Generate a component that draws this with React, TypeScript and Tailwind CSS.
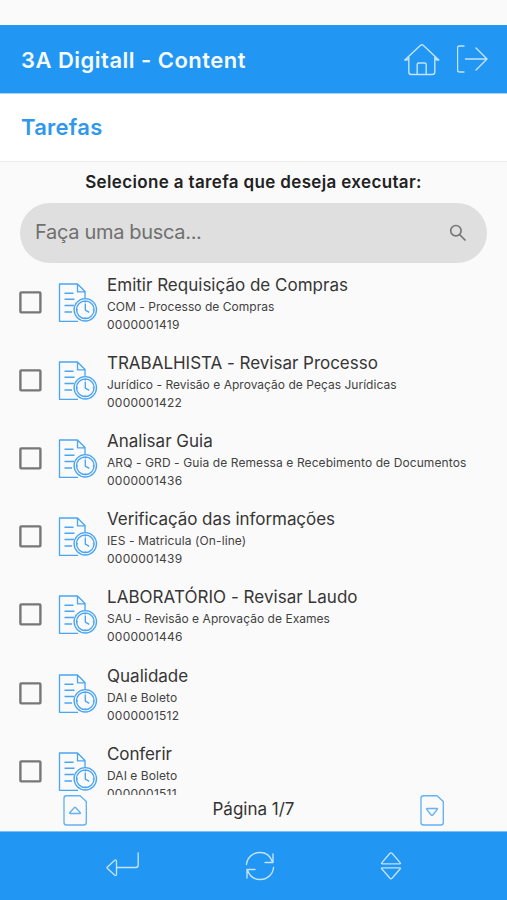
const tasks = [
  { title: 'Emitir Requisição de Compras', process: 'COM - Processo de Compras', id: '0000001419', titleSpacing: 'tracking-[0.010px]', processSpacing: 'tracking-[0.040px]' },
  { title: 'TRABALHISTA - Revisar Processo', process: 'Jurídico - Revisão e Aprovação de Peças Jurídicas', id: '0000001422', titleSpacing: 'tracking-[-0.020px]', processSpacing: 'tracking-[0.025px]' },
  { title: 'Analisar Guia', process: 'ARQ - GRD - Guia de Remessa e Recebimento de Documentos', id: '0000001436', titleSpacing: 'tracking-[0.010px]', processSpacing: 'tracking-[0.095px]' },
  { title: 'Verificação das informações', process: 'IES - Matricula (On-line)', id: '0000001439', titleSpacing: 'tracking-[-0.060px]', processSpacing: 'tracking-[0.100px]' },
  { title: 'LABORATÓRIO - Revisar Laudo', process: 'SAU - Revisão e Aprovação de Exames', id: '0000001446', titleSpacing: 'tracking-[0.040px]', processSpacing: 'tracking-[0.040px]' },
  { title: 'Qualidade', process: 'DAI e Boleto', id: '0000001512', titleSpacing: 'tracking-[0.010px]', processSpacing: 'tracking-[0.060px]' },
  { title: 'Conferir', process: 'DAI e Boleto', id: '0000001511', titleSpacing: 'tracking-[-0.100px]', processSpacing: 'tracking-[0.060px]' },
];

function HomeIcon() {
  return (
    <svg width="36" height="34" viewBox="0 0 36 34" fill="none" stroke="#c3e4fd" strokeWidth="1.4" strokeLinecap="round" strokeLinejoin="round">
      <path d="M.8 18 16.600 3.200Q18 2.100 19.200 3.200L34.800 18M.8 18q2.200.5 4-1.500M34.800 18q-2.200.5-4-1.500M4.800 15v15Q4.800 32.500 7.300 32.500h21q2.500 0 2.500-2.500V15M13.200 32.500V22.500q0-1.500 1.500-1.500h6q1.500 0 1.500 1.500v10" />
    </svg>
  );
}

function ExitIcon() {
  return (
    <svg width="32" height="30" viewBox="0 0 32 30" fill="none" stroke="#c3e4fd" strokeWidth="1.4" strokeLinecap="round" strokeLinejoin="round">
      <path d="M7 2H2.500q-2 0-2 2v22q0 2 2 2H7M8.500 15H30M19 4l11 11-11 11" />
    </svg>
  );
}

function CheckBox() {
  return (
    <svg className="mt-px shrink-0" width="23" height="24" viewBox="0 0 23 24" fill="none" stroke="#777" strokeWidth="2.400">
      <rect x="1.400" y="1.400" width="20" height="20" rx=".8" />
    </svg>
  );
}

function TaskIcon() {
  return (
    <svg className="shrink-0" width="40" height="40" viewBox="0 0 40 40" fill="none" stroke="#4aa5f3" strokeWidth="1.350" strokeLinejoin="round">
      <path d="M20 38.300H1.500V1h18l7.500 7.500V16M19.500 1v7.800H27M6.500 10.200h9M6.500 16.200h10M6.500 22.500h9.500M6.500 29h7.500" />
      <circle cx="27.300" cy="26.800" r="11.200" fill="#fafafa" />
      <circle cx="27.300" cy="26.800" r="8.800" />
      <path d="M27.300 20.600v6.500l4 2.300M27.300 18v1.500M27.300 34.200v1.400M18.500 26.800H20M34.800 26.800h1.300" />
    </svg>
  );
}

function PageIcon({ down = false }: { down?: boolean }) {
  return (
    <svg width="26" height="33" viewBox="0 0 26 33" fill="none" stroke="#64b1f5" strokeWidth="1.350" strokeLinejoin="round">
      <path d="M4.500.7h13.500l6.300 5.800V27.500q0 2.500-2.500 2.500H4.500Q2 30 2 27.500V3.200Q2 .7 4.500.7Z" />
      <path d={down ? 'M8.500 13.500h9.500q.9 0 .3.800l-4.500 5.700q-.8.800-1.600 0l-4.500-5.700Q7.100 13.500 8.500 13.500Z' : 'M8.500 18.500h9.500q.9 0 .3-.8l-4.500-5q-.8-.8-1.600 0l-4.500 5Q7.100 18.500 8.500 18.500Z'} />
    </svg>
  );
}

function ReturnIcon() {
  return (
    <svg width="34" height="26" viewBox="0 0 34 26" fill="none" stroke="#c3e4fd" strokeWidth="1.350" strokeLinecap="round" strokeLinejoin="round">
      <path d="M32.200.8v12.200q0 2.500-2.500 2.500H10.500M10.500 9.500V22q0 2.500-2 1L1.500 16.500q-1-.8 0-1.600L8.500 8.500q2-1.500 2 1Z" />
    </svg>
  );
}

function RefreshIcon() {
  return (
    <svg width="30" height="30" viewBox="0 0 30 30" fill="none" stroke="#c3e4fd" strokeWidth="1.350" strokeLinecap="round" strokeLinejoin="round">
      <path d="M1.500 13.500C2 6.500 8 1.500 15 1.500c6 0 10.500 3.500 12.500 9.500M28 3v8.500h-8M28.500 16.500c-.5 7-6.500 12-13.500 12-6 0-10.500-3.500-12.500-9.500M2 27v-8.500h8" />
    </svg>
  );
}

function SortIcon() {
  return (
    <svg width="22" height="30" viewBox="0 0 22 30" fill="none" stroke="#c3e4fd" strokeWidth="1.350" strokeLinejoin="round">
      <path d="M2.500 12.800h17q1.700 0 .6-1.200L12 2.300q-1-1-2 0L1.900 11.600Q.8 12.800 2.500 12.800ZM2.500 16.800h17q1.700 0 .6 1.200L12 27.300q-1 1-2 0L1.900 18Q.8 16.800 2.500 16.800Z" />
    </svg>
  );
}

export default function App() {
  return (
    <main className="flex h-[900px] w-[507px] flex-col overflow-hidden bg-[#fafafa] font-['Inter',sans-serif] text-[#333]">
      <div className="h-[25px] shrink-0" />
      <header className="flex h-[69px] shrink-0 items-center border-b border-[#a9d6fb] bg-[#2196f3] pl-[21px] pr-[18px]">
        <h1 className="flex-1 whitespace-nowrap pt-[2px] text-[22px] font-semibold tracking-[0.480px] text-[#f5fbff]">3A Digitall - Content</h1>
        <div className="flex items-center gap-[17px]">
          <HomeIcon />
          <ExitIcon />
        </div>
      </header>
      <div className="flex h-[68px] shrink-0 items-center border-b border-[#ececec] bg-white pl-[21px]">
        <h2 className="text-[22px] font-semibold tracking-[0.260px] text-[#2f97ec]">Tarefas</h2>
      </div>
      <p className="flex h-[41px] shrink-0 items-center justify-center whitespace-nowrap text-[17px] font-semibold tracking-[0.350px] text-[#222]">
        Selecione a tarefa que deseja executar:
      </p>
      <div className="mx-5 flex h-[60px] shrink-0 items-center justify-between rounded-full bg-[#dfdfdf] pl-[15px] pr-[20px]">
        <span className="pb-[2px] text-[20px] tracking-[-0.320px] text-[#707070]">Faça uma busca...</span>
        <svg width="18" height="18" viewBox="0 0 18 18" fill="none" stroke="#777" strokeWidth="1.700">
          <circle cx="6.900" cy="6.700" r="5.200" />
          <path d="m10.500 10.500 6 6" />
        </svg>
      </div>
      <ul className="h-[532px] shrink-0 overflow-hidden">
        {tasks.map((task) => (
          <li key={task.id} className="flex h-[78.200px] items-center pl-[19px]">
            <CheckBox />
            <span className="ml-[16px] mt-px shrink-0"><TaskIcon /></span>
            <div className="ml-[9px] whitespace-nowrap pt-[3px]">
              <div className={`text-[17px] leading-[23px] text-[#363636] ${task.titleSpacing}`}>{task.title}</div>
              <div className={`mt-px text-[12px] leading-[18px] text-[#424242] ${task.processSpacing}`}>{task.process}</div>
              <div className="text-[12px] leading-[18px] tracking-[0.250px] text-[#424242]">{task.id}</div>
            </div>
          </li>
        ))}
      </ul>
      <nav className="flex h-[36px] shrink-0 items-start justify-between pl-[62px] pr-[62px]">
        <PageIcon />
        <span className="pt-[2px] text-[17px] leading-[25px]">Página 1/7</span>
        <PageIcon down />
      </nav>
      <footer className="flex flex-1 items-center justify-between border-t border-[#7cc1f8] bg-[#2196f3] pl-[106px] pr-[105px]">
        <div className="pb-[2px]"><ReturnIcon /></div>
        <RefreshIcon />
        <SortIcon />
      </footer>
    </main>
  );
}
